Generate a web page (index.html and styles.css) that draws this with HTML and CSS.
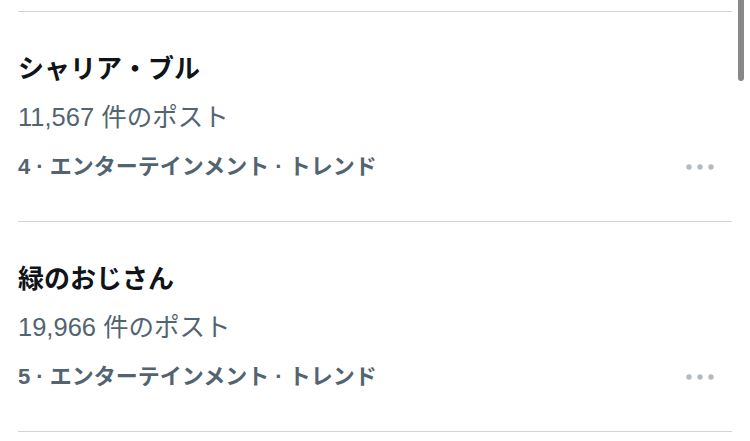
FILE: index.html
```html
<!DOCTYPE html>
<html lang="ja">

<head>
    <meta charset="UTF-8">
    <meta name="viewport" content="width=device-width, initial-scale=1.0">
    <title>Trends</title>
    <link rel="stylesheet" href="styles.css">
</head>

<body>
    <div class="scroll-thumb"></div>

    <div id="trend-list">
        <div class="trend">
            <div class="trend-title">シャリア・ブル</div>
            <div class="trend-count">11,567 件のポスト</div>
            <div class="trend-meta">
                <span>4 · エンターテインメント · トレンド</span>
                <svg class="more" width="28" height="8" viewBox="0 0 28 8">
                    <circle cx="3" cy="4" r="2.7"></circle>
                    <circle cx="14" cy="4" r="2.7"></circle>
                    <circle cx="25" cy="4" r="2.7"></circle>
                </svg>
            </div>
        </div>

        <div class="trend">
            <div class="trend-title">緑のおじさん</div>
            <div class="trend-count">19,966 件のポスト</div>
            <div class="trend-meta">
                <span>5 · エンターテインメント · トレンド</span>
                <svg class="more" width="28" height="8" viewBox="0 0 28 8">
                    <circle cx="3" cy="4" r="2.7"></circle>
                    <circle cx="14" cy="4" r="2.7"></circle>
                    <circle cx="25" cy="4" r="2.7"></circle>
                </svg>
            </div>
        </div>
    </div>
</body>

</html>
```

FILE: styles.css
```css
body {
    margin: 0;
    padding: 0;
    font-family: "Liberation Sans", "Noto Sans CJK JP", sans-serif;
    background-color: white;
    color: #0f1419;
    overflow: hidden;
}

#trend-list {
    margin: 11px 18px 0 18px;
    border-top: 1px solid #cfd4d8;
}

.trend {
    display: flex;
    flex-direction: column;
    padding: 39px 0 40px 0;
    border-bottom: 1px solid #cfd4d8;
}

.trend-title {
    font-size: 26px;
    font-weight: bold;
    line-height: 36px;
}

.trend-count {
    margin-top: 14px;
    font-size: 25.5px;
    line-height: 32px;
    color: #536471;
}

.trend-meta {
    display: flex;
    align-items: center;
    justify-content: space-between;
    margin-top: 20px;
    font-size: 22px;
    font-weight: bold;
    line-height: 28px;
    color: #536471;
}

.more {
    margin-right: 18px;
    fill: #b3bac1;
}

/* overlay scrollbar thumb */
.scroll-thumb {
    position: fixed;
    top: 0;
    right: 6px;
    width: 6px;
    height: 81px;
    background-color: #888888;
    border-radius: 0 0 3px 3px;
}
```
